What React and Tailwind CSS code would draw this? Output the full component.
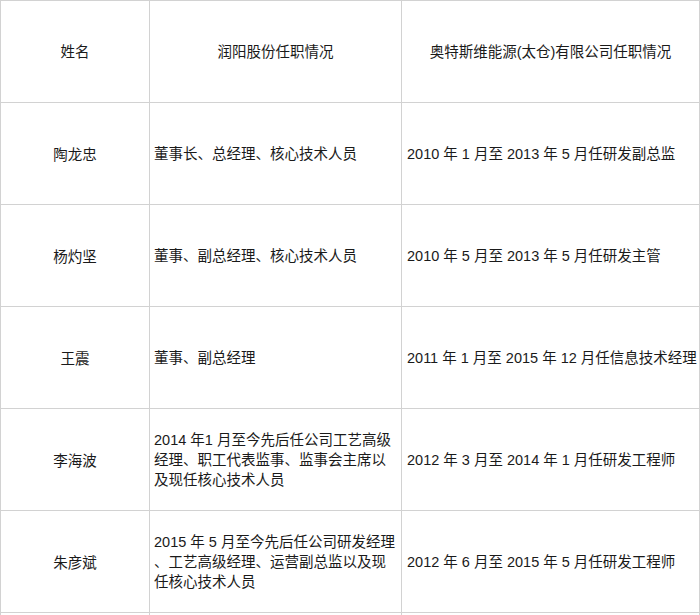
import React from "react";

const rows = [
  {
    name: "陶龙忠",
    runyang: ["董事长、总经理、核心技术人员"],
    other: "2010 年 1 月至 2013 年 5 月任研发副总监",
  },
  {
    name: "杨灼坚",
    runyang: ["董事、副总经理、核心技术人员"],
    other: "2010 年 5 月至 2013 年 5 月任研发主管",
  },
  {
    name: "王震",
    runyang: ["董事、副总经理"],
    other: "2011 年 1 月至 2015 年 12 月任信息技术经理",
  },
  {
    name: "李海波",
    runyang: [
      "2014 年1 月至今先后任公司工艺高级",
      "经理、职工代表监事、监事会主席以",
      "及现任核心技术人员",
    ],
    other: "2012 年 3 月至 2014 年 1 月任研发工程师",
  },
  {
    name: "朱彦斌",
    runyang: [
      "2015 年 5 月至今先后任公司研发经理",
      "、工艺高级经理、运营副总监以及现",
      "任核心技术人员",
    ],
    other: "2012 年 6 月至 2015 年 5 月任研发工程师",
  },
  { name: "", runyang: [], other: "" },
];

const App = () => {
  return (
    <div
      className="w-[700px] h-[615px] overflow-hidden bg-white text-[#1a1a1a] text-[14.5px] leading-[20px]"
      style={{ fontFamily: '"Liberation Sans", "Noto Sans CJK SC", sans-serif' }}
    >
      <table className="border-collapse w-[699px] table-fixed">
        <colgroup>
          <col className="w-[149px]" />
          <col className="w-[252px]" />
          <col className="w-[298px]" />
        </colgroup>
        <thead>
          <tr className="h-[102px]">
            <th className="border border-[#d2d2d2] font-normal text-center">姓名</th>
            <th className="border border-[#d2d2d2] font-normal text-center">润阳股份任职情况</th>
            <th className="border border-[#d2d2d2] font-normal text-center">
              奥特斯维能源(太仓)有限公司任职情况
            </th>
          </tr>
        </thead>
        <tbody>
          {rows.map((r, i) => (
            <tr key={i} className="h-[102px]">
              <td className="border border-[#d2d2d2] text-center align-middle pt-[2px]">{r.name}</td>
              <td className="border border-[#d2d2d2] px-[4px] align-middle whitespace-nowrap">
                {r.runyang.map((line, j) => (
                  <div key={j}>{line}</div>
                ))}
              </td>
              <td className="border border-[#d2d2d2] px-[5px] align-middle whitespace-nowrap">
                {r.other}
              </td>
            </tr>
          ))}
        </tbody>
      </table>
    </div>
  );
};

export default App;
